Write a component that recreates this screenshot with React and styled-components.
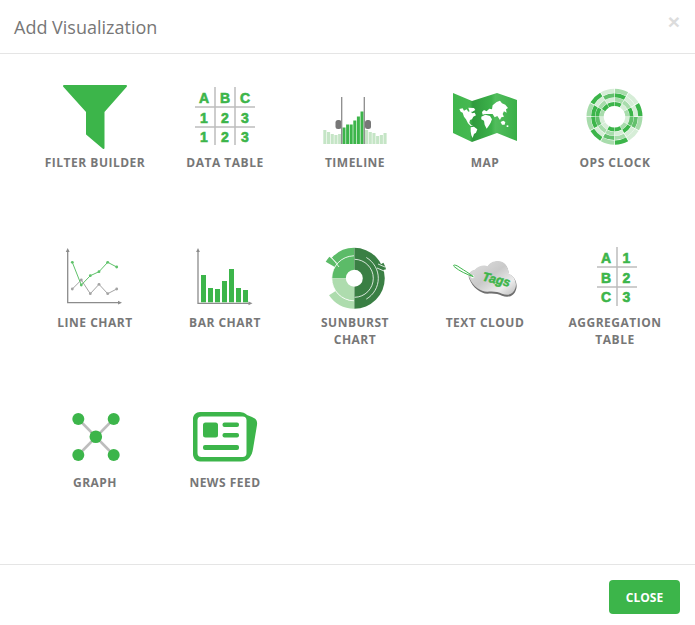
import React from "react";
import styled, {createGlobalStyle} from "styled-components";

const GREEN = "#3cb54a";
const GREY = "#bdbdbd";

const GlobalStyle = createGlobalStyle`
    * {
        box-sizing: border-box;
    }
    html, body {
        margin: 0;
        padding: 0;
        background: #fff;
        overflow: hidden;
    }
    body {
        font-family: "Open Sans", "Liberation Sans", sans-serif;
    }
`;

const Modal = styled.div`
    width: 695px;
    height: 625px;
    display: flex;
    flex-direction: column;
    background: #fff;
`;
const Header = styled.header`
    height: 54px;
    flex: none;
    display: flex;
    align-items: center;
    justify-content: space-between;
    padding: 0 15px 0 14px;
    border-bottom: 1px solid #e5e5e5;
`;
const Title = styled.h4`
    margin: 0;
    font-size: 18px;
    font-weight: 400;
    color: #777;
`;
const Dismiss = styled.button`
    border: 0;
    padding: 0;
    background: none;
    font-family: "Liberation Sans", sans-serif;
    font-size: 21px;
    font-weight: 700;
    line-height: 1;
    color: #dcdcdc;
    margin-bottom: 11px;
`;
const Body = styled.main`
    flex: 1;
    min-height: 0;
    display: grid;
    grid-template-columns: repeat(5, 130px);
    grid-auto-rows: 160px;
    padding: 28px 30px 0;
`;
const Item = styled.div`
    display: flex;
    flex-direction: column;
    align-items: center;
`;
const IconBox = styled.svg`
    display: block;
    width: 130px;
    height: 70px;
    flex: none;
`;
const Label = styled.div`
    margin-top: 2px;
    width: 110px;
    text-align: center;
    font-size: 12px;
    font-weight: 700;
    line-height: 17px;
    letter-spacing: 0.5px;
    color: #777;
`;
const Footer = styled.footer`
    height: 61px;
    flex: none;
    display: flex;
    justify-content: flex-end;
    align-items: flex-start;
    padding: 15px 15px 0 0;
    border-top: 1px solid #e5e5e5;
`;
const CloseButton = styled.button`
    width: 71px;
    height: 34px;
    border: 0;
    border-radius: 4px;
    background: ${GREEN};
    color: #fff;
    font-family: "Open Sans", sans-serif;
    font-size: 12px;
    font-weight: 700;
`;
const CellText = styled.text`
    font-family: "Liberation Sans", sans-serif;
    font-size: 14px;
    font-weight: 700;
    fill: ${GREEN};
    stroke: ${GREEN};
    stroke-width: 0.6px;
    text-anchor: middle;
`;
const TagText = styled.text`
    font-family: "Liberation Sans", sans-serif;
    font-size: 37px;
    font-weight: 700;
    font-style: italic;
    fill: ${GREEN};
    stroke: ${GREEN};
    stroke-width: 1.5px;
`;

const polar = (cx, cy, r, deg) => {
    const a = (deg - 90) * Math.PI / 180;
    return [cx + r * Math.cos(a), cy + r * Math.sin(a)];
};
// ring segment, degrees clockwise from 12 o'clock
const arcPath = (cx, cy, r0, r1, a0, a1) => {
    const large = a1 - a0 > 180 ? 1 : 0;
    const [x0, y0] = polar(cx, cy, r1, a0);
    const [x1, y1] = polar(cx, cy, r1, a1);
    const [x2, y2] = polar(cx, cy, r0, a1);
    const [x3, y3] = polar(cx, cy, r0, a0);
    return `M${x0} ${y0}A${r1} ${r1} 0 ${large} 1 ${x1} ${y1}L${x2} ${y2}A${r0} ${r0} 0 ${large} 0 ${x3} ${y3}Z`;
};
// open arc, for the thin white lines on the sunburst
const linePath = (cx, cy, r, a0, a1) => {
    const [x0, y0] = polar(cx, cy, r, a0);
    const [x1, y1] = polar(cx, cy, r, a1);
    return `M${x0} ${y0}A${r} ${r} 0 ${a1 - a0 > 180 ? 1 : 0} 1 ${x1} ${y1}`;
};

function FilterIcon() {
    return (
        <path
            fill={GREEN} stroke={GREEN} strokeWidth="2" strokeLinejoin="round"
            d="M64 86H126L103.5 111.5V148L87 134V111.5Z"
        />
    );
}

function Grid3({x, y, rows}) {
    const colX = [x + 14, x + 35, x + 55];
    return (
        <>
            <path stroke={GREY} strokeWidth="1.5" fill="none"
                d={`M${x + 5} ${y + 25}H${x + 65}M${x + 5} ${y + 45}H${x + 65}M${x + 25} ${y + 5}V${y + 63}M${x + 45} ${y + 5}V${y + 63}`}/>
            {rows.map((row, r) => row.map((c, i) => (
                <CellText key={`${r}${i}`} x={colX[i]} y={y + 21 + r * 19.5}>{c}</CellText>
            )))}
        </>
    );
}

function DataTableIcon() {
    return <Grid3 x={190} y={82} rows={[["A", "B", "C"], ["1", "2", "3"], ["1", "2", "3"]]}/>;
}

function TimelineIcon() {
    const lightLeft = [130, 132, 134, 135, 134];
    const lightRight = [130, 132, 133, 136, 135, 133];
    const solid = [127.5, 124.5, 124.5, 120.5, 116.5, 111.5];
    return (
        <>
            {lightLeft.map((t, i) => <rect key={i} x={323.3 + i * 3.7} y={t} width="3.1" height={144 - t} fill="#c5e5c6"/>)}
            {lightRight.map((t, i) => <rect key={i} x={365 + i * 3.7} y={t} width="3.1" height={144 - t} fill="#c5e5c6"/>)}
            {solid.map((t, i) => <rect key={i} x={342.5 + i * 3.6} y={t} width="3" height={144 - t} fill={GREEN}/>)}
            <rect x="335.5" y="120" width="6" height="9" rx="2.5" fill="#777"/>
            <rect x="365" y="120" width="6" height="9" rx="2.5" fill="#777"/>
            <path stroke="#8c8c8c" strokeWidth="1.3" d="M341.7 97V144M364.3 97V144"/>
        </>
    );
}

function MapIcon() {
    return (
        <>
            <defs>
                <linearGradient id="mapFold" x1="0" x2="1" y1="0" y2="0">
                    <stop offset="0" stopColor="#3fb64c"/>
                    <stop offset="0.26" stopColor="#45b851"/>
                    <stop offset="0.31" stopColor="#2f9a3d"/>
                    <stop offset="0.6" stopColor="#3cb14a"/>
                    <stop offset="0.66" stopColor="#52bd5d"/>
                    <stop offset="1" stopColor="#3aaf48"/>
                </linearGradient>
            </defs>
            <path fill="url(#mapFold)" d="M453 93L472 101L497 93L517 100V141L497 133L472 142L453 133Z"/>
            <g fill="#fff" transform="translate(300 70) scale(.3333)">
                <path d="M478 117L488 115L492 122L500 118L505 125L512 122L516 130L524 128L528 136L520 140L516 148L510 150L508 158L514 166L520 168L512 168L504 160L498 148L492 140L488 128L482 125Z"/>
                <path d="M505 113L522 114L526 120L516 126L508 122Z"/>
                <path d="M512 172L522 170L532 178L528 188L522 192L518 204L514 196L512 184Z"/>
                <path d="M546 126L552 120L560 124L568 116L576 118L578 106L590 96L600 92L606 100L616 104L624 114L618 118L620 128L612 124L608 132L612 140L604 142L600 150L592 138L584 142L578 132L566 132L556 132L548 134Z"/>
                <path d="M544 140L556 134L570 138L576 148L572 158L566 168L560 176L554 164L552 152L544 148Z"/>
                <path d="M602 156L610 152L616 156L614 164L606 164Z"/>
                <path d="M620 166L625 166L625 171L620 171Z"/>
            </g>
        </>
    );
}

const CLOCK_TONES = {l: "#d6edd7", m: "#a8dcac", h: "#62c06c", d: GREEN};
const CLOCK_RINGS = [
    {r0: 10.8, r1: 14.8, tones: "dlmlmddllmdd"},
    {r0: 15.1, r1: 19.1, tones: "mmdhdlmmhdml"},
    {r0: 19.4, r1: 23.4, tones: "dllhlmhlddlh"},
    {r0: 23.7, r1: 28, tones: "mldmldmdmmdl"},
];

function OpsClockIcon() {
    return (
        <>
            {CLOCK_RINGS.map((ring, r) => [...ring.tones].map((t, i) => (
                <path key={`${r}-${i}`} fill={CLOCK_TONES[t]} d={arcPath(614.5, 116.7, ring.r0, ring.r1, i * 30 + 0.8, i * 30 + 29.2)}/>
            )))}
        </>
    );
}

const dots = (pts, fill) => pts.map(([x, y]) => <circle key={x} cx={x} cy={y} r="1.4" fill={fill}/>);
const toLine = (pts) => pts.map((p) => p.join(",")).join(" ");

function LineChartIcon() {
    const grey = [[72.3, 289], [81.3, 280], [90.3, 293.7], [99, 284.3], [107.7, 293.7], [116.7, 289]];
    const green = [[72.3, 262.3], [81.3, 285], [90.3, 275.7], [99, 271.7], [107.7, 262.3], [116.7, 267]];
    return (
        <>
            <path d="M67.7 250V302.7H120" fill="none" stroke="#8c8c8c" strokeWidth="1.3"/>
            <path d="M67.7 248L65.8 252H69.6ZM122 302.7L118 300.8V304.6Z" fill="#8c8c8c"/>
            <polyline points={toLine(grey)} fill="none" stroke="#a3a3a3" strokeWidth="1"/>
            {dots(grey, "#a3a3a3")}
            <polyline points={toLine(green)} fill="none" stroke="#5fc26a" strokeWidth="1"/>
            {dots(green, "#5fc26a")}
        </>
    );
}

function BarChartIcon() {
    const tops = [275, 288, 289, 281, 269, 288, 290];
    return (
        <>
            <path d="M198 250V303.3H250" fill="none" stroke="#8c8c8c" strokeWidth="1.3"/>
            <path d="M198 248L196.1 252H199.9ZM252.5 303.3L248.5 301.4V305.2Z" fill="#8c8c8c"/>
            {tops.map((t, i) => <rect key={i} x={201 + i * 7} y={t} width="5" height={302.3 - t} fill={GREEN}/>)}
        </>
    );
}

function SunburstIcon() {
    const cx = 354.3, cy = 278.3;
    return (
        <>
            <path fill="#3a7f44" d={arcPath(cx, cy, 8.5, 30.5, 0, 180)}/>
            <path fill="#5cbb68" d={arcPath(cx, cy, 8.5, 22.5, 270, 359.5)}/>
            <path fill="#5cbb68" d={arcPath(cx, cy, 22.5, 30.5, 312, 359.5)}/>
            <path fill="#aedcae" d={arcPath(cx, cy, 8.5, 22.5, 180.5, 270)}/>
            <path fill="#aedcae" d={arcPath(cx, cy, 22.5, 30.5, 180.5, 236)}/>
            <path fill="#5cbb68" d={arcPath(cx, cy, 22.5, 33, 300, 311)}/>
            <path fill="#3a7f44" d={arcPath(cx, cy, 29, 33, 62, 74)}/>
            <path fill="none" stroke="#fff" strokeWidth=".8" d={linePath(cx, cy, 22.5, 181, 359)}/>
            <path fill="none" stroke="#fff" strokeWidth=".8" d={linePath(cx, cy, 19, 1, 179)}/>
            <path fill="none" stroke="#fff" strokeWidth=".8" d={linePath(cx, cy, 24, 30, 150)}/>
            <path stroke="#fff" strokeWidth=".8" d="M332 258L339 267M378 264L385 267M377 268L384 271"/>
        </>
    );
}

function TextCloudIcon() {
    return (
        <>
            <defs>
                <linearGradient id="cloudMetal" x1="0" x2="1" y1="0" y2="1">
                    <stop offset="0" stopColor="#e0e0e0"/>
                    <stop offset="0.45" stopColor="#c9c9c9"/>
                    <stop offset="0.75" stopColor="#ececec"/>
                    <stop offset="1" stopColor="#bdbdbd"/>
                </linearGradient>
            </defs>
            <g transform="translate(430 235) scale(.3333)">
                <path fill="#6f6f6f" d="M118 132C112 120 122 108 135 106C146 92 165 92 173 96C180 80 214 72 228 92C236 104 236 112 234 118C256 122 264 150 258 164C252 184 234 190 216 182C204 176 190 174 172 176C152 176 128 158 118 132Z"/>
                <path fill="url(#cloudMetal)" d="M118 128C114 116 122 106 135 104C146 90 165 90 173 94C180 78 214 70 228 90C236 102 236 110 234 116C254 120 262 146 256 160C250 178 234 184 216 176C204 170 190 168 172 170C152 170 128 154 118 128Z"/>
                <circle cx="128" cy="125" r="5" fill="#fff"/>
                <path d="M130 125C110 118 88 108 74 96C64 88 78 88 90 98C102 106 120 116 130 125" fill="none" stroke={GREEN} strokeWidth="3"/>
                <TagText x="155" y="136" transform="rotate(13 155 136)">Tags</TagText>
            </g>
        </>
    );
}

function AggregationIcon() {
    const rows = [["A", "1", 263], ["B", "2", 282.5], ["C", "3", 301.5]];
    return (
        <>
            <path stroke={GREY} strokeWidth="1.5" d="M597 267H637M597 287H637M617 247V306"/>
            {rows.map(([a, b, y]) => (
                <React.Fragment key={a}>
                    <CellText x="606" y={y}>{a}</CellText>
                    <CellText x="626.5" y={y}>{b}</CellText>
                </React.Fragment>
            ))}
        </>
    );
}

function GraphIcon() {
    const outer = [[78.3, 419], [113.7, 419], [78.3, 455], [113.7, 455]];
    return (
        <>
            <path stroke={GREY} strokeWidth="2.5" d="M78.3 419L113.7 455M113.7 419L78.3 455"/>
            {outer.map(([x, y]) => <circle key={`${x}${y}`} cx={x} cy={y} r="6" fill={GREEN}/>)}
            <circle cx="95.8" cy="436.7" r="6.3" fill={GREEN}/>
        </>
    );
}

function NewsFeedIcon() {
    return (
        <>
            <path fill={GREEN} d="M200 412H238C243 412 245 413 247 415L252 417C256.5 419 257.5 421 257 425L253 449C252 456 248 461.5 241 461.5H200C196 461.5 193 458 193 454V419C193 415 196 412 200 412Z"/>
            <rect x="197.5" y="416.5" width="49" height="40.5" rx="4" fill="#fff"/>
            <rect x="203" y="422.5" width="15" height="15" rx="2.5" fill={GREEN}/>
            <rect x="222.5" y="422.5" width="16.5" height="4.5" rx="2" fill={GREEN}/>
            <rect x="222.5" y="433" width="16.5" height="4.5" rx="2" fill={GREEN}/>
            <rect x="203" y="445" width="36" height="5" rx="2" fill={GREEN}/>
        </>
    );
}

// x, y: where the icon cell sits, the drawings use page coordinates
const visualizations = [
    {name: "Filter Builder", x: 30, y: 82, Icon: FilterIcon},
    {name: "Data Table", x: 160, y: 82, Icon: DataTableIcon},
    {name: "Timeline", x: 290, y: 82, Icon: TimelineIcon},
    {name: "Map", x: 420, y: 82, Icon: MapIcon},
    {name: "Ops Clock", x: 550, y: 82, Icon: OpsClockIcon},
    {name: "Line Chart", x: 30, y: 242, Icon: LineChartIcon},
    {name: "Bar Chart", x: 160, y: 242, Icon: BarChartIcon},
    {name: "Sunburst Chart", x: 290, y: 242, Icon: SunburstIcon},
    {name: "Text Cloud", x: 420, y: 242, Icon: TextCloudIcon},
    {name: "Aggregation Table", x: 550, y: 242, Icon: AggregationIcon},
    {name: "Graph", x: 30, y: 402, Icon: GraphIcon},
    {name: "News Feed", x: 160, y: 402, Icon: NewsFeedIcon},
];

export default function App() {
    return (
        <Modal>
            <GlobalStyle/>
            <Header>
                <Title>Add Visualization</Title>
                <Dismiss aria-label="Close">×</Dismiss>
            </Header>
            <Body>
                {visualizations.map(({name, x, y, Icon}) => (
                    <Item key={name}>
                        <IconBox viewBox={`${x} ${y} 130 70`}>
                            <Icon/>
                        </IconBox>
                        <Label>{name.toUpperCase()}</Label>
                    </Item>
                ))}
            </Body>
            <Footer>
                <CloseButton>CLOSE</CloseButton>
            </Footer>
        </Modal>
    );
}
